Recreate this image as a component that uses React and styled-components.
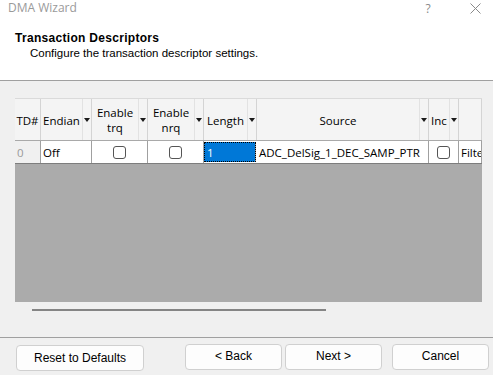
import React from "react";
import styled, { createGlobalStyle } from "styled-components";

const Global = createGlobalStyle`
  html, body { margin: 0; padding: 0; background: #ffffff; }
  body { font-family: "Liberation Sans", Arial, sans-serif; font-size: 12px; color: #000; }
`;

const Window = styled.div`
  width: 493px;
  height: 375px;
  display: flex;
  flex-direction: column;
  background: #f0f0f0;
  overflow: hidden;
`;

const TitleBar = styled.div`
  height: 20px;
  display: flex;
  align-items: flex-start;
  background: #ffffff;
  padding: 1px 8px 0 8px;
  box-sizing: border-box;
`;

const TitleText = styled.div`
  flex: 1;
  font-family: "Open Sans", "Noto Sans", sans-serif;
  font-size: 12px;
  line-height: 14px;
  color: #9a9a9a;
`;

const TitleButton = styled.div`
  width: ${(p) => p.$w}px;
  margin-left: ${(p) => p.$ml || 0}px;
  height: 14px;
  display: flex;
  align-items: center;
  justify-content: center;
  color: #8a8a8a;
  font-family: "Open Sans", sans-serif;
  font-size: 12px;
`;

const Header = styled.div`
  background: #ffffff;
  height: 61px;
  box-sizing: border-box;
  padding: 11px 0 0 15px;
  border-bottom: 1px solid #a0a0a0;
`;

const Heading = styled.div`
  font-weight: bold;
  font-size: 12px;
  line-height: 15px;
  letter-spacing: 0.3px;
`;

const SubHeading = styled.div`
  padding-left: 15px;
  font-size: 11.5px;
  line-height: 15px;
`;

const Body = styled.div`
  flex: 1;
  display: flex;
  flex-direction: column;
  padding: 17px 11px 0 15px;
`;

const COLS = "26px 51px 56px 56px 53px 172px 30px 23px";

const Grid = styled.div`
  width: 467px;
  height: 204px;
  background: #ababab;
  border-top: 1px solid #dadada;
  box-sizing: border-box;
  overflow: hidden;
  font-family: "Open Sans", "Noto Sans", sans-serif;
  font-size: 11.5px;
`;

const HeaderRow = styled.div`
  display: grid;
  grid-template-columns: ${COLS};
  height: 41px;
  background: #f4f4f4;
  border-bottom: 1px solid #a9a9a9;
`;

const HeadCell = styled.div`
  display: flex;
  align-items: stretch;
  border-right: 1px solid #d4d4d4;
  min-width: 0;
`;

const HeadLabel = styled.div`
  flex: 1;
  display: flex;
  align-items: center;
  justify-content: center;
  text-align: center;
  line-height: 15px;
  white-space: nowrap;
  overflow: hidden;
  padding-top: 1px;
`;

const ArrowBox = styled.div`
  width: 8px;
  border-left: 1px solid #e2e2e2;
  display: flex;
  align-items: center;
  justify-content: center;
  padding-top: 1px;
  &::after {
    content: "";
    border-left: 3px solid transparent;
    border-right: 3px solid transparent;
    border-top: 4px solid #1a1a1a;
  }
`;

const DataRow = styled.div`
  display: grid;
  grid-template-columns: ${COLS};
  height: 23px;
  background: #ffffff;
  border-bottom: 1px solid #7d7d7d;
  box-sizing: border-box;
`;

const Cell = styled.div`
  display: flex;
  align-items: center;
  justify-content: ${(p) => (p.$center ? "center" : "flex-start")};
  padding-left: ${(p) => (p.$center ? 0 : 2)}px;
  border-right: 1px solid #a0a0a0;
  background: ${(p) => (p.$muted ? "#f0f0f0" : "#ffffff")};
  color: ${(p) => (p.$muted ? "#9a9a9a" : "#000000")};
  white-space: nowrap;
  overflow: hidden;
  min-width: 0;
`;

const SelectedCell = styled.div`
  display: flex;
  align-items: center;
  padding-left: 3px;
  margin: 1px 1px 1px 0;
  background: #0078d7;
  color: #ffffff;
  outline: 1px dotted #000;
  outline-offset: -1px;
  border-right: 1px solid #a0a0a0;
`;

const Check = styled.div`
  width: 11px;
  height: 11px;
  border: 1px solid #555555;
  border-radius: 3px;
  background: #ffffff;
`;

const ScrollTrack = styled.div`
  height: 9px;
  display: flex;
  align-items: flex-end;
  padding-left: 17px;
`;

const ScrollThumb = styled.div`
  width: 294px;
  height: 2px;
  background: #858585;
`;

const Footer = styled.div`
  height: 38px;
  box-sizing: border-box;
  border-top: 1px solid #a0a0a0;
  display: flex;
  align-items: flex-start;
  padding: 6px 0 0 16px;
`;

const Button = styled.button`
  width: ${(p) => p.$w}px;
  height: 26px;
  margin-left: ${(p) => p.$ml || 0}px;
  margin-top: ${(p) => p.$mt || 0}px;
  border: 1px solid #d0d0d0;
  border-radius: 4px;
  background: #fdfdfd;
  font-family: "Liberation Sans", Arial, sans-serif;
  font-size: 12px;
  color: #000;
  padding: 0;
  padding-bottom: ${(p) => p.$pb || 0}px;
`;

const columns = [
  { label: "TD#", arrow: false },
  { label: "Endian", arrow: true },
  { label: ["Enable", "trq"], arrow: true },
  { label: ["Enable", "nrq"], arrow: true },
  { label: "Length", arrow: true },
  { label: "Source", arrow: true },
  { label: "Inc", arrow: true },
  { label: "", arrow: false },
];

export default function App() {
  return (
    <>
      <Global />
      <Window>
        <TitleBar>
          <TitleText>DMA Wizard</TitleText>
          <TitleButton $w={14}>?</TitleButton>
          <TitleButton $w={20} $ml={30}>
            <svg width="11" height="11" viewBox="0 0 11 11">
              <path d="M0.5 0.5 L10.5 10.5 M10.5 0.5 L0.5 10.5" stroke="#8a8a8a" strokeWidth="1" fill="none" />
            </svg>
          </TitleButton>
        </TitleBar>
        <Header>
          <Heading>Transaction Descriptors</Heading>
          <SubHeading>Configure the transaction descriptor settings.</SubHeading>
        </Header>
        <Body>
          <Grid>
            <HeaderRow>
              {columns.map((c, i) => (
                <HeadCell key={i}>
                  <HeadLabel>
                    {Array.isArray(c.label) ? (
                      <span>
                        {c.label[0]}
                        <br />
                        {c.label[1]}
                      </span>
                    ) : (
                      c.label
                    )}
                  </HeadLabel>
                  {c.arrow && <ArrowBox />}
                </HeadCell>
              ))}
            </HeaderRow>
            <DataRow>
              <Cell $muted>0</Cell>
              <Cell>Off</Cell>
              <Cell $center>
                <Check />
              </Cell>
              <Cell $center>
                <Check />
              </Cell>
              <SelectedCell>1</SelectedCell>
              <Cell>ADC_DelSig_1_DEC_SAMP_PTR</Cell>
              <Cell $center>
                <Check />
              </Cell>
              <Cell>Filter</Cell>
            </DataRow>
          </Grid>
          <ScrollTrack>
            <ScrollThumb />
          </ScrollTrack>
        </Body>
        <Footer>
          <Button $w={128} $mt={1}>Reset to Defaults</Button>
          <Button $w={97} $ml={41} $pb={3}>&lt; Back</Button>
          <Button $w={97} $ml={3} $pb={3}>Next &gt;</Button>
          <Button $w={97} $ml={10} $pb={3}>Cancel</Button>
        </Footer>
      </Window>
    </>
  );
}
